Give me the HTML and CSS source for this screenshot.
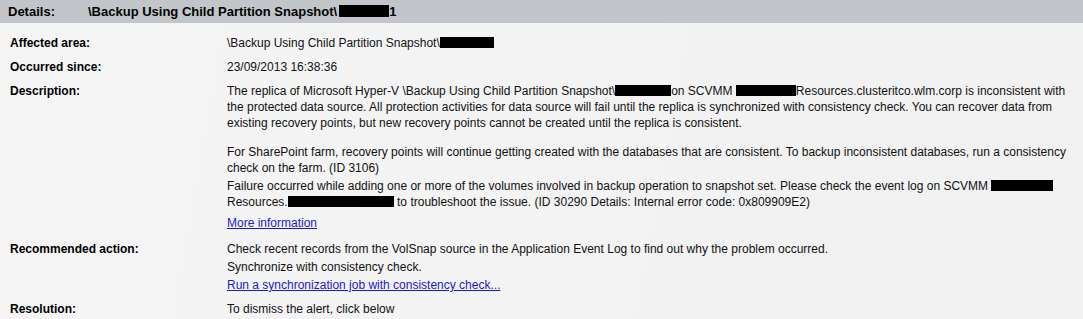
FILE: index.html
```html
<html>
    <head>
        <title>Alert Details</title>
        <meta name="viewport" content="width=device-width, initial-scale=1">
        <link rel="stylesheet" href="styles.css">
    </head>
    <body>
        <div class="header">
            <span class="header-label">Details:</span>
            <span class="header-title">\Backup Using Child Partition Snapshot\<span class="redact redact-head"></span>1</span>
        </div>

        <div class="details">
            <div class="row">
                <div class="label">Affected area:</div>
                <div class="value">\Backup Using Child Partition Snapshot\<span class="redact" style="width:54px"></span></div>
            </div>

            <div class="row">
                <div class="label">Occurred since:</div>
                <div class="value">23/09/2013 16:38:36</div>
            </div>

            <div class="row row-long">
                <div class="label">Description:</div>
                <div class="value">
                    <p class="para">The replica of Microsoft Hyper-V \Backup Using Child Partition Snapshot\<span class="redact" style="width:56px"></span>on SCVMM <span class="redact" style="width:60px"></span>Resources.clusteritco.wlm.corp is inconsistent with<br>the protected data source. All protection activities for data source will fail until the replica is synchronized with consistency check. You can recover data from<br>existing recovery points, but new recovery points cannot be created until the replica is consistent.</p>
                    <p class="para para-gap">For SharePoint farm, recovery points will continue getting created with the databases that are consistent. To backup inconsistent databases, run a consistency<br>check on the farm. (ID 3106)</p>
                    <p class="para para-tight">Failure occurred while adding one or more of the volumes involved in backup operation to snapshot set. Please check the event log on SCVMM <span class="redact" style="width:62px"></span><br>Resources.<span class="redact" style="width:106px"></span> to troubleshoot the issue. (ID 30290 Details: Internal error code: 0x809909E2)</p>
                    <a class="link more" href="#">More information</a>
                </div>
            </div>

            <div class="row">
                <div class="label">Recommended action:</div>
                <div class="value">
                    <p class="para">Check recent records from the VolSnap source in the Application Event Log to find out why the problem occurred.</p>
                    <p class="para para-tight">Synchronize with consistency check.</p>
                    <a class="link step" href="#">Run a synchronization job with consistency check...</a>
                </div>
            </div>

            <div class="row">
                <div class="label">Resolution:</div>
                <div class="value">To dismiss the alert, click below</div>
            </div>
        </div>
    </body>
</html>
```

FILE: styles.css
```css
body {
    margin: 0;
    padding: 0;
    background: linear-gradient(100deg, #f5f5f5, #f1f1f1);
    font-family: "Liberation Sans", Arial, sans-serif;
    font-size: 12px;
    color: #111;
    height: 100vh;
    overflow: hidden;
}

.header {
    height: 23px;
    background: #c2c6ca;
    display: flex;
    align-items: center;
    font-weight: bold;
    font-size: 13px;
    color: #000;
}

.header-label {
    width: 80px;
    padding-left: 8px;
}

.header-title {
    white-space: nowrap;
}

.details {
    padding: 12px 0 0 10px;
}

.row {
    display: flex;
    line-height: 16px;
    margin-bottom: 8px;
}

.row-long {
    margin-bottom: 10px;
}

.label {
    width: 217px;
    flex: none;
    font-weight: bold;
    color: #000;
}

.value {
    white-space: nowrap;
}

.para {
    margin: 0;
}

.para-gap {
    margin-top: 13px;
}

.para-tight {
    margin-top: 2px;
}

.link {
    display: block;
    color: #1a1ac8;
    text-decoration: underline;
}

.more {
    margin-top: 5px;
}

.step {
    margin-top: 2px;
}

.redact {
    display: inline-block;
    height: 11px;
    background: #000;
    vertical-align: -1px;
}

.redact-head {
    width: 50px;
    height: 12px;
    margin-left: 2px;
}
```
